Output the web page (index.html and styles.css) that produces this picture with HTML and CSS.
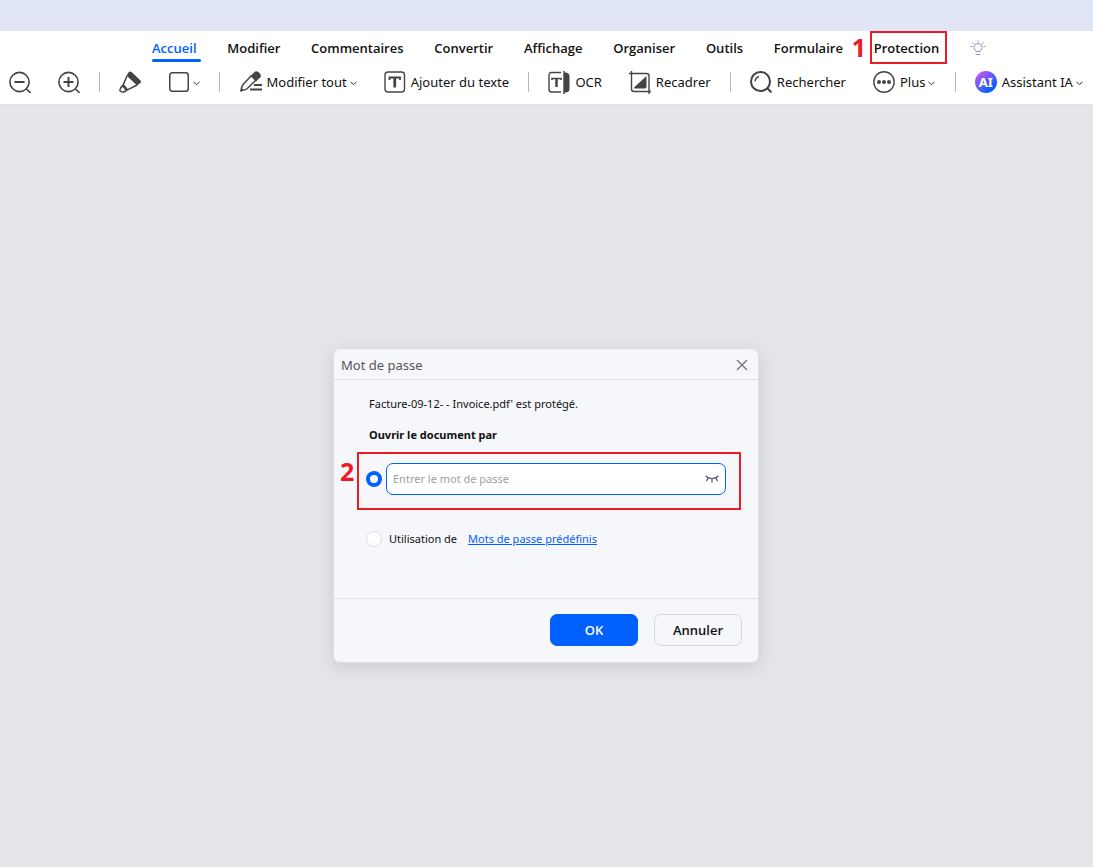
FILE: index.html
```html
<!DOCTYPE html>
<html lang="fr">
<head>
<meta charset="utf-8">
<title>Mot de passe</title>
<link rel="stylesheet" href="styles.css">
</head>
<body>
<div class="app">
  <div class="titlebar"></div>
  <header class="header">
    <nav class="tabs">
      <a class="tab active" href="#">Accueil</a>
      <a class="tab" href="#">Modifier</a>
      <a class="tab" href="#">Commentaires</a>
      <a class="tab" href="#">Convertir</a>
      <a class="tab" href="#">Affichage</a>
      <a class="tab" href="#">Organiser</a>
      <a class="tab" href="#">Outils</a>
      <a class="tab" href="#">Formulaire</a>
      <a class="tab" href="#">Protection<span class="mark mark-tab"></span><span class="step step-one">1</span></a>
      <button class="tip" aria-label="Conseils">
        <svg width="16" height="16" viewBox="0 0 16 16" fill="none" stroke="#8f93b8"><path d="M6 11.5C5.9 10.4 4 9.8 4 7.500A4 4 0 0 1 12 7.500C12 9.800 10.100 10.400 10 11.500Z"/><path d="M5.500 14.500h5M8 .5v2M2.500 2.500l1.500 1.500M13.500 2.500L12 4M.5 6.500h2M13.500 6.500h2"/></svg>
      </button>
    </nav>
    <div class="toolbar">
      <div class="group">
        <button class="tool" aria-label="Zoom arrière"><svg width="22" height="22" viewBox="0 0 22 22" fill="none" stroke="#444" stroke-width="1.600"><circle cx="10.500" cy="11" r="9.600"/><path d="M17.500 18l4 4"/><path d="M5.500 11h10" stroke-width="2"/></svg></button>
        <button class="tool" aria-label="Zoom avant"><svg width="22" height="22" viewBox="0 0 22 22" fill="none" stroke="#444" stroke-width="1.600"><circle cx="10.500" cy="11" r="9.600"/><path d="M17.500 18l4 4"/><path d="M5.500 11h10M10.500 6v10" stroke-width="2"/></svg></button>
      </div>
      <span class="sep"></span>
      <div class="group">
        <button class="tool" aria-label="Surligner"><svg width="22" height="22" viewBox="0 0 22 22"><path d="M9.500 1.500Q11 -.2 12.600 1L21.500 9.600Q22.500 11 21.300 12L18 14.500 7.500 4.500Z" fill="#444"/><path d="M8 5L4.300 13.600 8.500 18.800 18 14M4.300 13.600Q1 16.500 .8 19.500 1.800 21.300 5 21L8.500 18.800M3.600 15.500Q6 16 6.500 19" fill="none" stroke="#444" stroke-width="1.500" stroke-linejoin="round"/></svg></button>
        <button class="tool" aria-label="Forme"><svg width="22" height="22" viewBox="0 0 22 22" fill="none" stroke="#444" stroke-width="1.500"><rect x="1.750" y="1.750" width="18.500" height="18.500" rx="2.500"/></svg><svg class="chev" width="7" height="5" viewBox="0 0 7 5"><path d="M.5 1l3 2.500L6.500 1"/></svg></button>
      </div>
      <span class="sep"></span>
      <div class="group">
        <button class="tool"><svg width="22" height="22" viewBox="0 0 22 22"><path d="M13.500 2Q16.500-1.500 19.500 2T19 7.500L16 10.500 10.500 5Z" fill="#444"/><path d="M11.500 4.500L3 13.500Q1.500 15.500 1.200 19.300 5 19.500 7 17.800L16 9" fill="none" stroke="#444" stroke-width="1.500"/><path d="M.5 20.500l2-2.500M14 14h8M10 18.500h12" fill="none" stroke="#444" stroke-width="2"/></svg><span>Modifier tout</span><svg class="chev" width="7" height="5" viewBox="0 0 7 5"><path d="M.5 1l3 2.500L6.500 1"/></svg></button>
        <button class="tool"><svg width="22" height="22" viewBox="0 0 22 22" fill="none" stroke="#444"><rect x="1" y="1" width="19.500" height="20" rx="3" stroke-width="1.400"/><path d="M5.500 9V6.500H16V9" stroke-width="1.800"/><path d="M10.750 6v10.500" stroke-width="2.800"/></svg><span>Ajouter du texte</span></button>
      </div>
      <span class="sep"></span>
      <div class="group">
        <button class="tool"><svg width="22" height="24" viewBox="0 0 22 24" fill="none" stroke="#444"><path d="M13 2.500H3.500Q1 2.500 1 5V19.500Q1 22 3.500 22H13" stroke-width="1.400"/><path d="M4 10V8.500h9V10" stroke-width="1.600"/><path d="M8.500 8v9" stroke-width="2.500"/><path d="M16 1v23" stroke-width="1.400"/><path d="M16 2.500h2Q21.500 3 21.500 6V19Q21.500 22 18 22.500H16Z" fill="#444" stroke="none"/></svg><span>OCR</span></button>
        <button class="tool"><svg width="22" height="24" viewBox="0 0 22 24" fill="none" stroke="#444" stroke-width="1.400"><path d="M2.500 1V19Q2.500 21.500 5 21.500H22M0 3.500H17.500Q20 3.500 20 6V24"/><path d="M17.500 6v11Q17.500 18.500 16 18.500H5.500Q4.500 18 5.500 17Z" fill="#444" stroke="none"/></svg><span>Recadrer</span></button>
      </div>
      <span class="sep"></span>
      <div class="group">
        <button class="tool"><svg width="22" height="22" viewBox="0 0 22 22" fill="none" stroke="#444"><circle cx="10.500" cy="10.500" r="9.500" stroke-width="2"/><path d="M17 17l4.500 4.500" stroke-width="2"/><path d="M5 10.500Q5.500 6.500 9 5.500" stroke-width="1.400"/></svg><span>Rechercher</span></button>
        <button class="tool"><svg width="22" height="22" viewBox="0 0 22 22" fill="#444"><circle cx="11" cy="11" r="10.200" fill="none" stroke="#444" stroke-width="1.400"/><circle cx="6" cy="11" r="2"/><circle cx="11" cy="11" r="2"/><circle cx="16" cy="11" r="2"/></svg><span>Plus</span><svg class="chev" width="7" height="5" viewBox="0 0 7 5"><path d="M.5 1l3 2.500L6.500 1"/></svg></button>
      </div>
      <span class="sep"></span>
      <div class="group">
        <button class="tool"><span class="ai">AI</span><span>Assistant IA</span><svg class="chev" width="7" height="5" viewBox="0 0 7 5"><path d="M.5 1l3 2.500L6.500 1"/></svg></button>
      </div>
    </div>
  </header>
  <main class="workspace">
    <form class="dialog" role="dialog" aria-labelledby="dialog-title">
      <div class="dialog-head">
        <h1 class="dialog-title" id="dialog-title">Mot de passe</h1>
        <button type="button" class="close" aria-label="Fermer"><svg width="12" height="12" viewBox="0 0 12 12" fill="none" stroke="#6b6e80" stroke-width="1.200"><path d="M1 1l10 10M11 1L1 11"/></svg></button>
      </div>
      <div class="dialog-body">
        <p class="file">Facture-09-12- - Invoice.pdf' est protégé.</p>
        <p class="prompt">Ouvrir le document par</p>
        <div class="choice choice-password">
          <span class="step step-two">2</span>
          <input class="radio" type="radio" name="mode" aria-label="Mot de passe" checked>
          <div class="field">
            <input class="field-input" type="text" placeholder="Entrer le mot de passe" aria-label="Entrer le mot de passe">
            <button type="button" class="eye" aria-label="Afficher le mot de passe"><svg width="14" height="8" viewBox="0 0 14 8" fill="none" stroke="#4a4a66" stroke-width="1.200"><path d="M.5 1Q7 6 13.500 1M3 3L1.500 6M7 4v3.500M11 3l1.500 3"/></svg></button>
          </div>
        </div>
        <div class="choice choice-preset">
          <input class="radio" type="radio" name="mode" id="preset">
          <label class="preset-label" for="preset">Utilisation de</label>
          <a class="preset-link" href="#">Mots de passe prédéfinis</a>
        </div>
      </div>
      <div class="dialog-foot">
        <button type="submit" class="btn primary">OK</button>
        <button type="button" class="btn">Annuler</button>
      </div>
    </form>
  </main>
</div>
</body>
</html>
```
FILE: styles.css
```css
* { box-sizing: border-box; }
body { margin: 0; font-family: "Open Sans", "Noto Sans", sans-serif; font-size: 13px; color: #111; }
button { margin: 0; padding: 0; border: 0; background: none; font: inherit; color: inherit; }
svg { display: block; flex: none; }
.app { display: flex; flex-direction: column; min-height: 100vh; background: #e5e6ea; }
.titlebar { height: 31px; background: #e0e6f5; }
.header { background: #fff; border-bottom: 1px solid #dfe0e4; }

.tabs { display: flex; justify-content: space-between; align-items: center; height: 34px; padding: 0 107px 0 152px; }
.tab { position: relative; line-height: 34px; color: #111; font-weight: 600; text-decoration: none; white-space: nowrap; }
.tab.active { color: #0061ff; }
.tab.active::after { content: ""; position: absolute; left: 0; right: -4px; bottom: 3px; height: 3px; border-radius: 2px; background: #0061ff; }
.tip { display: flex; }
.mark { position: absolute; border: 2px solid #ed1c24; }
.mark-tab { inset: 0 -8px 1px -4px; }
.step { position: absolute; color: #ed1c24; font-family: "Open Sans", sans-serif; font-size: 25px; line-height: 34px; font-weight: 700; }
.step-one { left: -22px; top: -1px; }
.step-two { left: -19px; top: 0; }

.toolbar { display: flex; align-items: center; justify-content: space-between; height: 39px; padding: 0 10px 5px 9px; font-family: "Noto Sans", sans-serif; }
.group { display: flex; align-items: center; gap: 27px; }
.tool { display: flex; align-items: center; gap: 5px; white-space: nowrap; line-height: 22px; }
.tool .chev { margin: 2px 0 0 -2px; fill: none; stroke: #333; }
.sep { width: 1px; height: 20px; background: #b4b8c8; }
.ai { width: 22px; height: 22px; border-radius: 50%; background: linear-gradient(140deg, #e055f0, #6a5cf8 45%, #0061ff 80%); color: #fff; font-size: 13px; font-weight: 700; text-align: center; }

.workspace { flex: 1; display: flex; flex-direction: column; align-items: center; padding: 244px 17px 16px 16px; }
.dialog { width: 100%; max-width: 426px; border-radius: 7px; background: #f6f7fb; border: 1px solid #dddfe6; border-top-color: #f0f1f5; box-shadow: 0 4px 18px rgba(70, 75, 100, .18); font-family: "Noto Sans", sans-serif; font-size: 11px; }
.dialog-head { display: flex; align-items: center; justify-content: space-between; height: 30px; padding: 0 10px 0 7px; border-bottom: 1px solid #dddfe6; }
.dialog-title { margin: 0; font-size: 13px; font-weight: 400; line-height: 28px; color: #555; }
.close { display: flex; }
.dialog-body { padding: 16px 17px 50px 23px; }
.file, .prompt { margin: 0 0 15px 12px; line-height: 16px; }
.prompt { margin-bottom: 9px; font-weight: 700; }
.choice { position: relative; display: flex; align-items: center; }
.choice-password { gap: 4px; height: 58px; padding: 0 13px 4px 7px; border: 2px solid #ed1c24; }
.radio { appearance: none; flex: none; width: 16px; height: 16px; margin: 0; border: 1px solid #dcdde2; border-radius: 50%; background: #fff; }
.radio:checked { border: 4px solid #0061ff; }
.field { flex: 1; display: flex; align-items: center; height: 32px; padding: 0 6px; border: 1px solid #0061ff; border-radius: 7px; background: #fff; }
.field-input { flex: 1; min-width: 0; height: 28px; padding: 0 0 2px; border: 0; outline: 0; background: none; font: inherit; }
.field-input::placeholder { color: #a0a0a0; opacity: 1; }
.eye { display: flex; }
.choice-preset { margin: 20px 0 0 9px; height: 18px; line-height: 16px; }
.preset-label { margin: 0 11px 0 7px; }
.preset-link { color: #0061ff; }
.dialog-foot { display: flex; justify-content: flex-end; gap: 16px; padding: 15px 16px 16px; border-top: 1px solid #dddfe6; }
.btn { width: 88px; height: 32px; border: 1px solid #d6d8df; border-radius: 7px; font-family: "Open Sans", sans-serif; font-size: 13px; font-weight: 600; color: #111; }
.btn.primary { border-color: #0061ff; background: #0061ff; color: #fff; }
```
